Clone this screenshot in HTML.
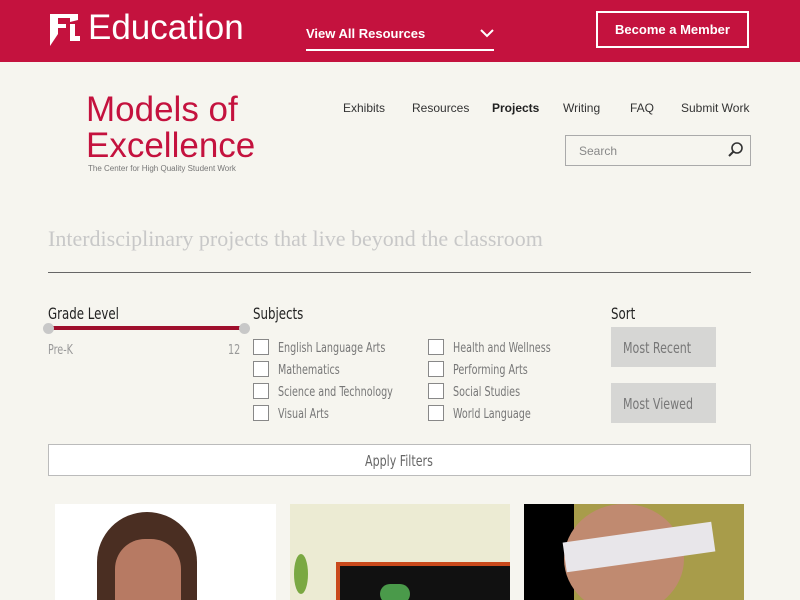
<!DOCTYPE html>
<html><head><meta charset="utf-8"><style>
*{margin:0;padding:0;box-sizing:border-box}
html,body{width:800px;height:600px;overflow:hidden}
body{background:#f6f5ef;font-family:"Liberation Sans",sans-serif;position:relative}
.top{position:absolute;left:0;top:0;width:800px;height:62px;background:#c4123e}
.abs{position:absolute}
.nar{font-family:"DejaVu Sans Condensed","Liberation Sans",sans-serif;transform:scaleX(0.82);transform-origin:left top;white-space:nowrap}
.cb{position:absolute;width:16px;height:16px;border:1px solid #888;background:#fff}
.lbl{position:absolute;font-size:13px;color:#777}
</style></head><body>
<div class="top"></div>
<svg class="abs" style="left:50px;top:14px" width="30" height="32" viewBox="0 0 30 32"><path d="M0 0H28V6L20 8V4H8V10H16V14H8V20L0 32Z" fill="#fff"/><path d="M20 10H25V22H30V27H20Z" fill="#fff"/></svg>
<div class="abs" style="left:88px;top:8px;font-size:35px;color:#fff;">Education</div>
<div class="abs" style="left:306px;top:26px;font-size:13px;font-weight:bold;color:#fff">View All Resources</div>
<svg class="abs" style="left:480px;top:29px" width="14" height="9"><path d="M1 1L7 7L13 1" stroke="#fff" stroke-width="2" fill="none"/></svg>
<div class="abs" style="left:306px;top:49px;width:188px;height:2px;background:#fff"></div>
<div class="abs" style="left:596px;top:11px;width:153px;height:37px;border:2px solid #fff;color:#fff;font-size:13px;font-weight:bold;text-align:center;line-height:33px">Become a Member</div>

<div class="abs" style="left:86px;top:92px;font-size:35px;line-height:36px;color:#c4123e;font-weight:300">Models of<br>Excellence</div>
<div class="abs" style="left:88px;top:164px;font-size:8px;color:#777">The Center for High Quality Student Work</div>
<div class="abs" style="top:101px;font-size:12px;color:#333;left:343px">Exhibits</div>
<div class="abs" style="top:101px;font-size:12px;color:#333;left:412px">Resources</div>
<div class="abs" style="top:101px;font-size:12px;color:#222;left:492px;font-weight:bold">Projects</div>
<div class="abs" style="top:101px;font-size:12px;color:#333;left:563px">Writing</div>
<div class="abs" style="top:101px;font-size:12px;color:#333;left:630px">FAQ</div>
<div class="abs" style="top:101px;font-size:12px;color:#333;left:681px">Submit Work</div>
<div class="abs" style="left:565px;top:135px;width:186px;height:31px;border:1px solid #aaa;background:#f6f5ef"></div>
<div class="abs" style="left:579px;top:144px;font-size:12px;color:#888">Search</div>
<svg class="abs" style="left:728px;top:142px" width="16" height="16"><circle cx="9" cy="6" r="5" stroke="#333" stroke-width="1.6" fill="none"/><path d="M5.5 9.5L1 14" stroke="#333" stroke-width="2"/></svg>

<div class="abs" style="left:48px;top:226px;font-family:'Liberation Serif',serif;font-size:22px;color:#c8c8c8">Interdisciplinary projects that live beyond the classroom</div>
<div class="abs" style="left:48px;top:272px;width:703px;height:1px;background:#666"></div>

<div class="abs nar" style="left:48px;top:304px;font-size:16px;color:#222">Grade Level</div>
<div class="abs" style="left:48px;top:326px;width:196px;height:4px;background:#9f0f2c"></div>
<div class="abs" style="left:43px;top:323px;width:11px;height:11px;border-radius:50%;background:#c8c8c8"></div>
<div class="abs" style="left:239px;top:323px;width:11px;height:11px;border-radius:50%;background:#c8c8c8"></div>
<div class="abs nar" style="left:48px;top:343px;font-size:13px;color:#999">Pre-K</div>
<div class="abs nar" style="left:228px;top:343px;font-size:13px;color:#999">12</div>

<div class="abs nar" style="left:253px;top:304px;font-size:16px;color:#222">Subjects</div>
<div class="cb" style="left:253px;top:339px"></div><div class="lbl nar" style="left:278px;top:341px">English Language Arts</div>
<div class="cb" style="left:253px;top:361px"></div><div class="lbl nar" style="left:278px;top:363px">Mathematics</div>
<div class="cb" style="left:253px;top:383px"></div><div class="lbl nar" style="left:278px;top:385px">Science and Technology</div>
<div class="cb" style="left:253px;top:405px"></div><div class="lbl nar" style="left:278px;top:407px">Visual Arts</div>
<div class="cb" style="left:428px;top:339px"></div><div class="lbl nar" style="left:453px;top:341px">Health and Wellness</div>
<div class="cb" style="left:428px;top:361px"></div><div class="lbl nar" style="left:453px;top:363px">Performing Arts</div>
<div class="cb" style="left:428px;top:383px"></div><div class="lbl nar" style="left:453px;top:385px">Social Studies</div>
<div class="cb" style="left:428px;top:405px"></div><div class="lbl nar" style="left:453px;top:407px">World Language</div>

<div class="abs nar" style="left:611px;top:304px;font-size:16px;color:#222">Sort</div>
<div class="abs" style="left:611px;top:327px;width:105px;height:40px;background:#d6d6d4"></div>
<div class="abs nar" style="left:623px;top:339px;color:#777;font-size:15px">Most Recent</div>
<div class="abs" style="left:611px;top:383px;width:105px;height:40px;background:#d6d6d4"></div>
<div class="abs nar" style="left:623px;top:395px;color:#777;font-size:15px">Most Viewed</div>

<div class="abs" style="left:48px;top:444px;width:703px;height:32px;border:1px solid #bbb;background:#fff"></div>
<div class="abs nar" style="left:365px;top:452px;font-size:15px;color:#666">Apply Filters</div>

<div class="abs" style="left:55px;top:504px;width:221px;height:96px;background:#fff;overflow:hidden">
<div class="abs" style="left:42px;top:8px;width:100px;height:120px;border-radius:50px 50px 0 0;background:#4a2e22"></div>
<div class="abs" style="left:60px;top:35px;width:66px;height:80px;border-radius:30px 30px 0 0;background:#b77a63"></div></div>
<div class="abs" style="left:290px;top:504px;width:220px;height:96px;background:#ecebd3;overflow:hidden">
<div class="abs" style="left:46px;top:58px;width:180px;height:50px;background:#c94a1c"></div>
<div class="abs" style="left:50px;top:62px;width:180px;height:50px;background:#111"></div>
<div class="abs" style="left:90px;top:80px;width:30px;height:20px;border-radius:10px;background:#4a9a4a"></div>
<div class="abs" style="left:4px;top:50px;width:14px;height:40px;border-radius:50%;background:#7aa842"></div></div>
<div class="abs" style="left:524px;top:504px;width:220px;height:96px;background:#a89c4a;overflow:hidden">
<div class="abs" style="left:0;top:0;width:50px;height:96px;background:#000"></div>
<div class="abs" style="left:40px;top:0;width:120px;height:110px;border-radius:50%;background:#c08a70"></div>
<div class="abs" style="left:40px;top:28px;width:150px;height:30px;background:#e8e6ea;transform:rotate(-8deg)"></div></div>
</body></html>
